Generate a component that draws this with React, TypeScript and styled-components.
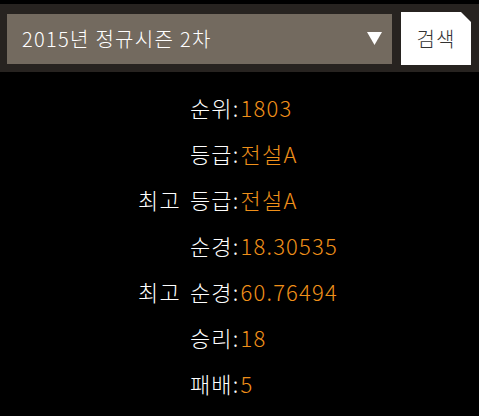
import styled, { createGlobalStyle } from "styled-components"

const GlobalStyle = createGlobalStyle`
  html, body {
    margin: 0;
    padding: 0;
    background: #000;
  }
  body {
    font-family: "Noto Sans CJK KR", "Noto Sans", sans-serif;
    font-weight: 300;
  }
`

const Main = styled.div`
  width: 479px;
  height: 416px;
  box-sizing: border-box;
  padding-top: 4px;
  background: #000;
  color: #fff;
  overflow: hidden;
`

const SearchBar = styled.div`
  height: 68px;
  box-sizing: border-box;
  background: #272320;
  display: flex;
  align-items: center;
  padding: 0 8px 0 7px;
  gap: 9px;
`

const SeasonSelect = styled.div`
  flex: 1;
  height: 50px;
  margin-top: 1px;
  background: #736a5f;
  display: flex;
  align-items: center;
  justify-content: space-between;
  padding: 0 10px 0 15px;
  font-size: 20px;
  color: #fff;
  letter-spacing: 1.3px;
`

const Arrow = styled.svg`
  width: 15px;
  height: 13px;
`

const SearchButton = styled.button`
  position: relative;
  width: 70px;
  height: 53px;
  border: none;
  background: #fff;
  color: #333;
  font-family: inherit;
  font-weight: 300;
  font-size: 20px;
  letter-spacing: 1px;
  padding: 0;
  &::after {
    content: "";
    position: absolute;
    top: 0;
    right: 0;
    border-style: solid;
    border-width: 0 10px 10px 0;
    border-color: transparent #272320 transparent transparent;
  }
`

const StatList = styled.div`
  display: grid;
  grid-template-columns: 1fr 1fr;
  row-gap: 14px;
  padding-top: 19px;
  font-size: 22px;
  line-height: 32px;
  letter-spacing: 1.2px;
`

const Label = styled.div`
  text-align: right;
  color: #fff;
  word-spacing: 3px;
`

const Value = styled.div`
  color: #f0901a;
  padding-left: 1px;
`

const stats = [
  ["순위", "1803"],
  ["등급", "전설A"],
  ["최고 등급", "전설A"],
  ["순경", "18.30535"],
  ["최고 순경", "60.76494"],
  ["승리", "18"],
  ["패배", "5"],
]

export default function App() {
  return (
    <Main>
      <GlobalStyle />
      <SearchBar>
        <SeasonSelect>
          <span>2015년 정규시즌 2차</span>
          <Arrow viewBox="0 0 15 13">
            <polygon points="0,0 15,0 7.5,13" fill="#fff" />
          </Arrow>
        </SeasonSelect>
        <SearchButton>검색</SearchButton>
      </SearchBar>
      <StatList>
        {stats.map(([k, v]) => (
          <>
            <Label key={k + "-l"}>{k}:</Label>
            <Value key={k + "-v"}>{v}</Value>
          </>
        ))}
      </StatList>
    </Main>
  )
}
